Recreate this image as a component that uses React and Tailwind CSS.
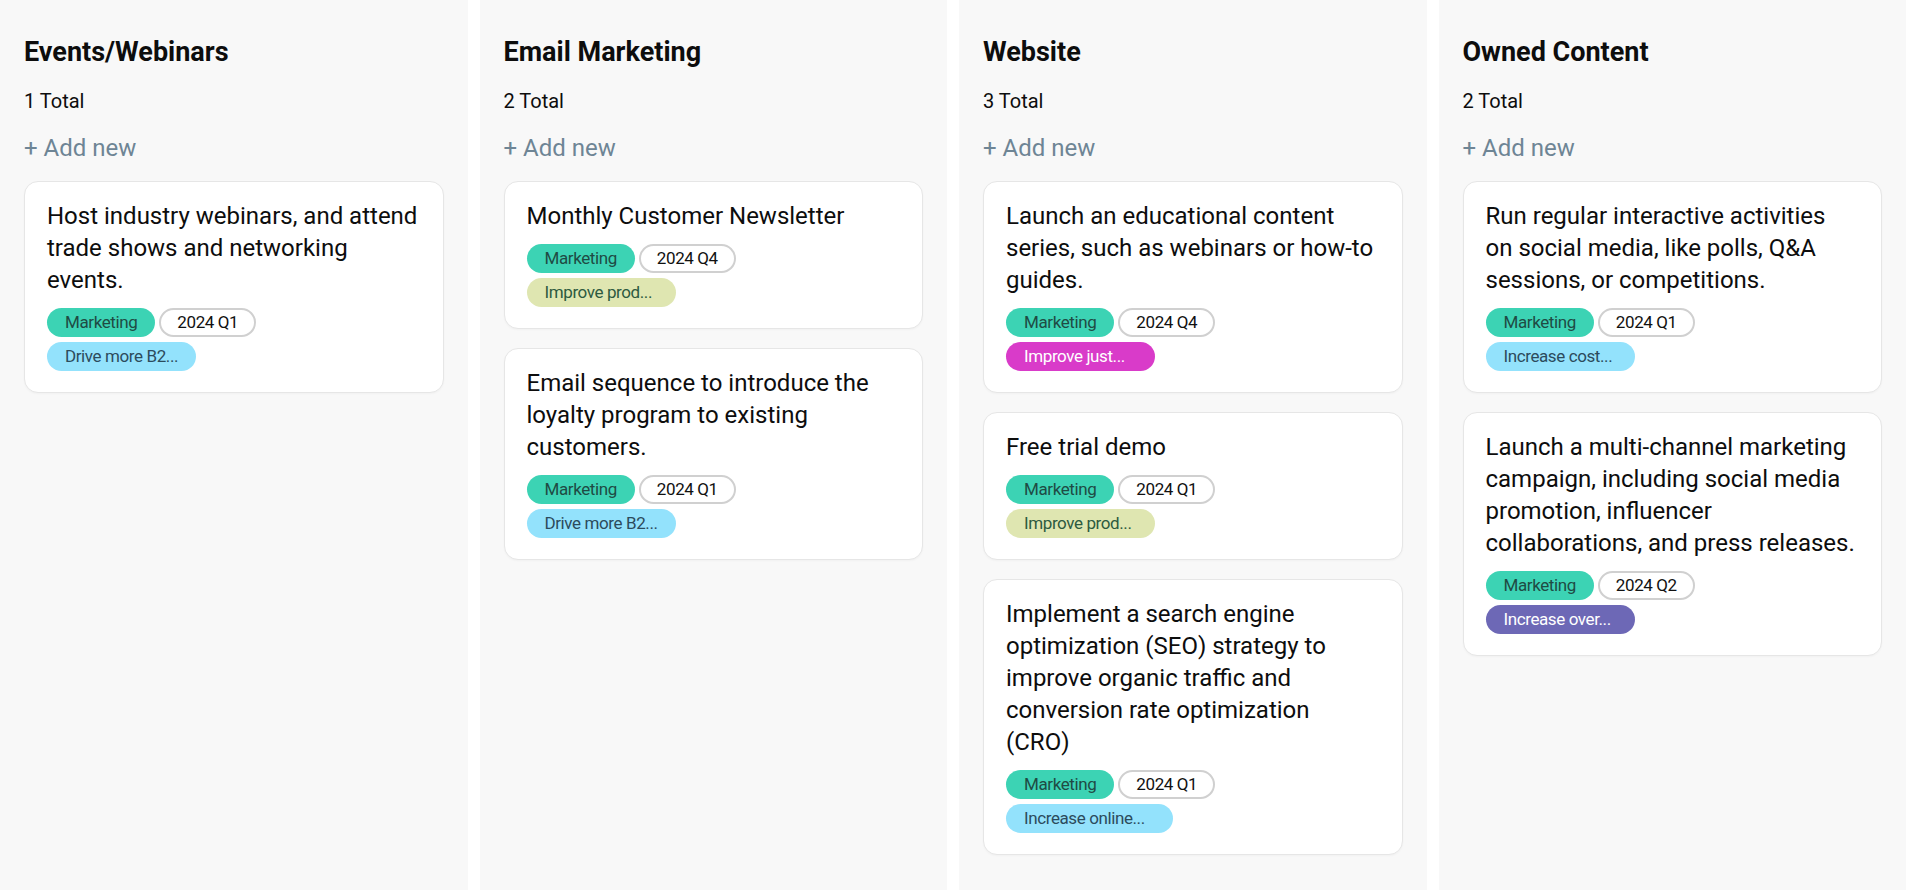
import React from "react";

const TAG_STYLES = {
  blue: "bg-[#93e2fc] text-[#2c4b5c]",
  khaki: "bg-[#dfe6b1] text-[#2d5a40]",
  magenta: "bg-[#d93bc9] text-white",
  purple: "bg-[#6d68b6] text-white",
};

const columns = [
  {
    title: "Events/Webinars",
    total: "1 Total",
    cards: [
      {
        text: "Host industry webinars, and attend trade shows and networking events.",
        quarter: "2024 Q1",
        goal: "Drive more B2...",
        color: "blue",
      },
    ],
  },
  {
    title: "Email Marketing",
    total: "2 Total",
    cards: [
      { text: "Monthly Customer Newsletter", quarter: "2024 Q4", goal: "Improve prod...", color: "khaki" },
      {
        text: "Email sequence to introduce the loyalty program to existing customers.",
        quarter: "2024 Q1",
        goal: "Drive more B2...",
        color: "blue",
      },
    ],
  },
  {
    title: "Website",
    total: "3 Total",
    cards: [
      {
        text: "Launch an educational content series, such as webinars or how-to guides.",
        quarter: "2024 Q4",
        goal: "Improve just...",
        color: "magenta",
      },
      { text: "Free trial demo", quarter: "2024 Q1", goal: "Improve prod...", color: "khaki" },
      {
        text: "Implement a search engine optimization (SEO) strategy to improve organic traffic and conversion rate optimization (CRO)",
        quarter: "2024 Q1",
        goal: "Increase online...",
        color: "blue",
        wide: true,
      },
    ],
  },
  {
    title: "Owned Content",
    total: "2 Total",
    cards: [
      {
        text: "Run regular interactive activities on social media, like polls, Q&A sessions, or competitions.",
        quarter: "2024 Q1",
        goal: "Increase cost...",
        color: "blue",
      },
      {
        text: "Launch a multi-channel marketing campaign, including social media promotion, influencer collaborations, and press releases.",
        quarter: "2024 Q2",
        goal: "Increase over...",
        color: "purple",
      },
    ],
  },
];

function Card({ card }) {
  return (
    <div className="rounded-[14px] border border-[#e6e6e6] bg-white pt-[18px] pb-[21px] pl-[22px] pr-[24px] shadow-[0_1px_2px_rgba(0,0,0,0.03)]">
      <p className="text-[24px] leading-[32px] text-[#0d0d0d]">{card.text}</p>
      <div className="mt-[12px] flex flex-col items-start gap-[5px]">
        <div className="flex gap-[4px]">
          <span className="flex h-[29px] items-center rounded-full bg-[#3cd3b4] px-[18px] text-[17px] tracking-[-0.4px] text-[#1f4b44]">
            Marketing
          </span>
          <span className="flex h-[29px] items-center rounded-full border-2 border-[#d0d0d0] bg-white px-[16px] text-[17px] tracking-[-0.4px] text-[#111111]">
            {card.quarter}
          </span>
        </div>
        <span
          className={
            "flex h-[29px] items-center rounded-full pl-[18px] text-[17px] tracking-[-0.4px] " +
            (card.wide ? "min-w-[167px] " : "min-w-[149px] pr-[18px] ") +
            TAG_STYLES[card.color]
          }
        >
          {card.goal}
        </span>
      </div>
    </div>
  );
}

function Column({ col }) {
  return (
    <div className="flex-1 min-w-0 bg-[#f8f8f8] px-[24px] pt-[36px]">
      <h2 className="text-[27px] font-bold leading-[32px] text-[#0d0d0d]">{col.title}</h2>
      <div className="mt-[21px] text-[20px] leading-[24px] text-[#0d0d0d]">{col.total}</div>
      <div className="mt-[19px] text-[24px] leading-[32px] text-[#6e8595]">+ Add new</div>
      <div className="mt-[17px] flex flex-col gap-[19px]">
        {col.cards.map((c, i) => (
          <Card key={i} card={c} />
        ))}
      </div>
    </div>
  );
}

export default function App() {
  return (
    <div
      className="flex h-[890px] w-full gap-[12px] bg-white"
      style={{ fontFamily: "Roboto, 'Liberation Sans', sans-serif" }}
    >
      {columns.map((col) => (
        <Column key={col.title} col={col} />
      ))}
    </div>
  );
}
